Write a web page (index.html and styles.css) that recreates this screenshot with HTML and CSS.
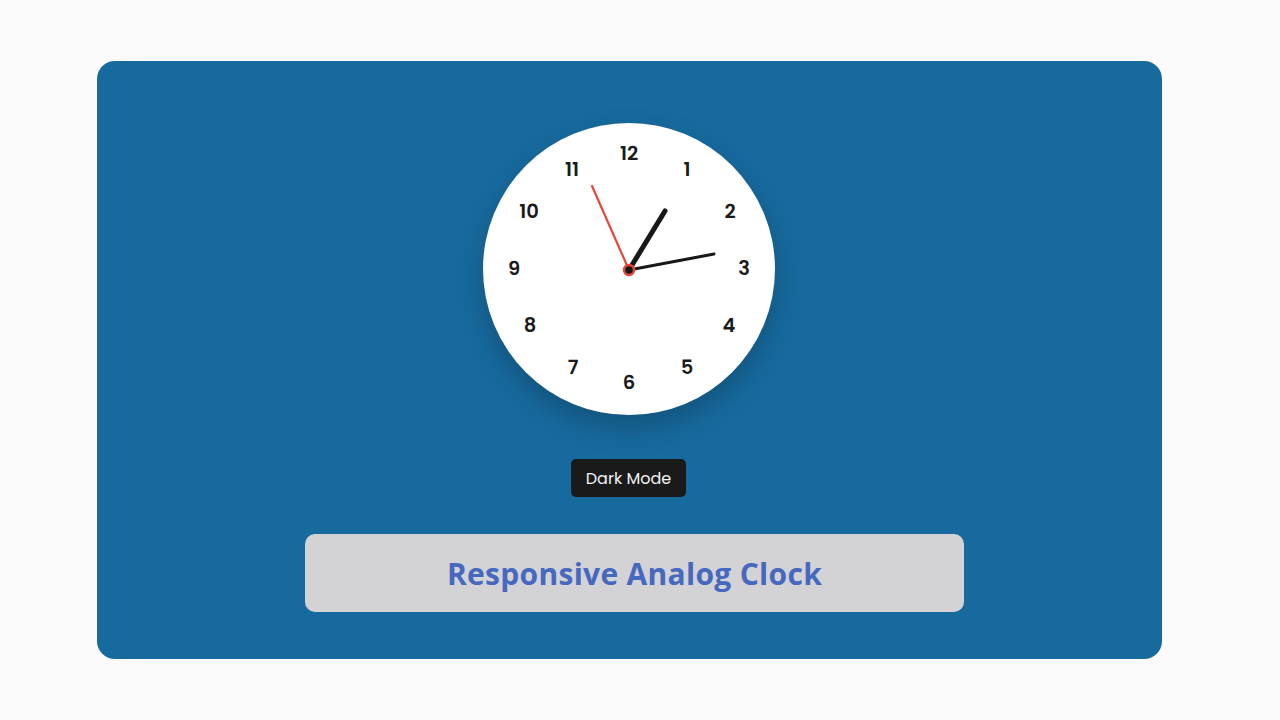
FILE: index.html
```html
<!DOCTYPE html>
<html>
<head>
<meta charset="utf-8">
<link rel="stylesheet" href="styles.css">
</head>
<body>
<main class="card">
  <div class="clock">
    <svg class="face" width="292" height="292" viewBox="-146 -146 292 292">
      <g class="nums">
        <text x="0" y="-116">12</text>
        <text x="58" y="-100">1</text>
        <text x="101" y="-58">2</text>
        <text x="115" y="-1">3</text>
        <text x="100" y="56">4</text>
        <text x="58" y="98">5</text>
        <text x="0" y="113">6</text>
        <text x="-56" y="98">7</text>
        <text x="-99" y="56">8</text>
        <text x="-115" y="-1">9</text>
        <text x="-100" y="-58">10</text>
        <text x="-57" y="-100">11</text>
      </g>
      <line x1="0" y1="1" x2="36" y2="-58" class="hour"/>
      <line x1="0" y1="1" x2="85" y2="-15" class="minute"/>
      <line x1="0" y1="1" x2="-37" y2="-83" class="second"/>
      <circle cx="0" cy="1" r="5" class="pin"/>
    </svg>
  </div>
  <button class="mode">Dark Mode</button>
  <div class="title">
    <h1>Responsive Analog Clock</h1>
  </div>
</main>
</body>
</html>
```
FILE: styles.css
```css
html, body {
  margin: 0;
  padding: 0;
  background: #fbfbfb;
}
body {
  width: 1280px;
  height: 720px;
  overflow: hidden;
}
.card {
  box-sizing: border-box;
  margin: 61px 0 0 97px;
  width: 1065px;
  height: 598px;
  border-radius: 18px;
  background: #176a9e;
  display: flex;
  flex-direction: column;
  align-items: center;
  padding-top: 62px;
}
.clock {
  width: 292px;
  height: 292px;
  border-radius: 50%;
  background: #ffffff;
  box-shadow: 0 12px 28px rgba(0, 0, 0, 0.22);
  margin-right: 2px;
}
.face {
  display: block;
}
.nums text {
  font-family: "Poppins", "Inter", "Noto Sans", sans-serif;
  font-weight: 600;
  font-size: 19.5px;
  fill: #1b1b1b;
  text-anchor: middle;
  dominant-baseline: central;
}
.hour {
  stroke: #181818;
  stroke-width: 5;
  stroke-linecap: round;
}
.minute {
  stroke: #181818;
  stroke-width: 3;
  stroke-linecap: round;
}
.second {
  stroke: #e8453a;
  stroke-width: 2.2;
  stroke-linecap: round;
}
.pin {
  fill: #181818;
  stroke: #e8453a;
  stroke-width: 2.5;
}
.mode {
  margin-top: 44px;
  margin-right: 2px;
  width: 115px;
  height: 38px;
  border: none;
  border-radius: 5px;
  background: #1a1a1a;
  color: #f2f2f2;
  font-family: "Poppins", "Inter", "Noto Sans", sans-serif;
  font-size: 16px;
  font-weight: 400;
  padding: 0;
}
.title {
  margin-top: 37px;
  margin-left: 10px;
  width: 659px;
  height: 78px;
  border-radius: 10px;
  background: #d3d3d6;
  display: flex;
  align-items: center;
  justify-content: center;
}
.title h1 {
  margin: 0;
  font-family: "Open Sans", "Noto Sans", sans-serif;
  font-weight: 700;
  font-size: 30px;
  letter-spacing: 0.3px;
  color: #4768bf;
}
```
